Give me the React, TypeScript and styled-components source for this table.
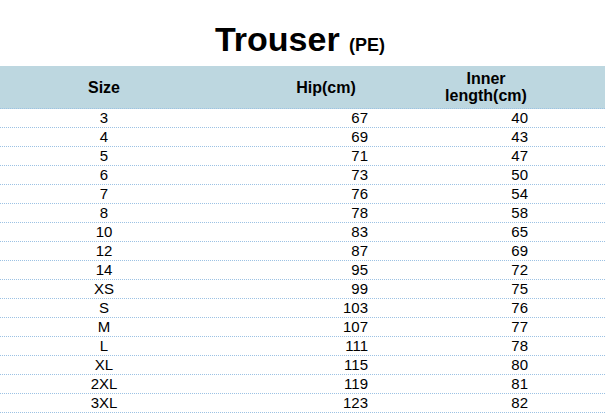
import styled, { createGlobalStyle } from 'styled-components';

const rows: [string, number, number][] = [
	['3', 67, 40],
	['4', 69, 43],
	['5', 71, 47],
	['6', 73, 50],
	['7', 76, 54],
	['8', 78, 58],
	['10', 83, 65],
	['12', 87, 69],
	['14', 95, 72],
	['XS', 99, 75],
	['S', 103, 76],
	['M', 107, 77],
	['L', 111, 78],
	['XL', 115, 80],
	['2XL', 119, 81],
	['3XL', 123, 82],
];

export default function App() {
	return (
		<>
			<GlobalStyle />
			<Page>
				<Title>
					Trouser <Sub>(PE)</Sub>
				</Title>
				<HeaderRow>
					<SizeCell>Size</SizeCell>
					<HipCell>Hip(cm)</HipCell>
					<InnerCell>
						Inner
						<br />
						length(cm)
					</InnerCell>
				</HeaderRow>
				{rows.map(([size, hip, inner]) => (
					<Row key={size}>
						<SizeCell>{size}</SizeCell>
						<HipCell $data>{hip}</HipCell>
						<InnerCell $data>{inner}</InnerCell>
					</Row>
				))}
			</Page>
		</>
	);
}

const GlobalStyle = createGlobalStyle`
	body {
		margin: 0;
		background: #ffffff;
		font-family: 'Liberation Sans', Arial, sans-serif;
		color: #000000;
	}
`;

const Page = styled.div`
	width: 605px;
	height: 413px;
	overflow: hidden;
`;

const Title = styled.h1`
	box-sizing: border-box;
	height: 66px;
	margin: 0;
	padding-top: 19px;
	padding-right: 5px;
	text-align: center;
	font-size: 34px;
	line-height: 40px;
	font-weight: bold;
`;

const Sub = styled.span`
	font-size: 18px;
`;

const RowBase = styled.div`
	display: grid;
	grid-template-columns: 208px 162px 160px 1fr;
	align-items: center;
	border-bottom: 1px dotted #9cc2e4;
`;

const HeaderRow = styled(RowBase)`
	height: 42px;
	background: #bdd7e0;
	font-size: 16px;
	line-height: 17px;
	font-weight: bold;
`;

const Row = styled(RowBase)`
	height: 18px;
	font-size: 15px;
	line-height: 18px;
`;

const SizeCell = styled.div`
	text-align: center;
`;

const HipCell = styled.div<{ $data?: boolean }>`
	padding-left: 74px;
	padding-right: ${p => (p.$data ? '2px' : '0')};
	text-align: ${p => (p.$data ? 'right' : 'center')};
`;

const InnerCell = styled.div<{ $data?: boolean }>`
	padding-left: 72px;
	padding-right: ${p => (p.$data ? '2px' : '0')};
	text-align: ${p => (p.$data ? 'right' : 'center')};
`;
